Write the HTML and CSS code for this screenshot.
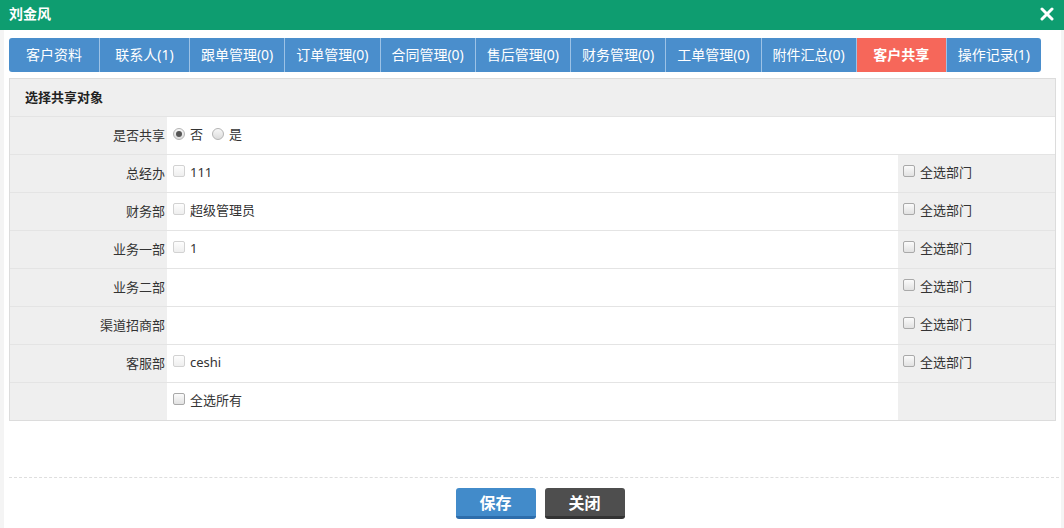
FILE: index.html
```html
<!DOCTYPE html>
<html lang="zh-CN">
<head>
<meta charset="utf-8">
<title>刘金风</title>
<link rel="stylesheet" href="styles.css">
</head>
<body>
<div class="dialog">
  <div class="titlebar">
    <span class="title">刘金风</span>
    <svg class="close" width="14" height="14" viewBox="0 0 14 14"><path d="M2 2 L12 12 M12 2 L2 12" stroke="#fff" stroke-width="3" stroke-linecap="round"/></svg>
  </div>
  <div class="content">
    <div class="tabs">
      <div class="tab first">客户资料</div>
      <div class="tab">联系人(1)</div>
      <div class="tab">跟单管理(0)</div>
      <div class="tab">订单管理(0)</div>
      <div class="tab">合同管理(0)</div>
      <div class="tab">售后管理(0)</div>
      <div class="tab">财务管理(0)</div>
      <div class="tab">工单管理(0)</div>
      <div class="tab">附件汇总(0)</div>
      <div class="tab active">客户共享</div>
      <div class="tab last">操作记录(1)</div>
    </div>

    <div class="panel">
      <div class="row head"><span class="head-text">选择共享对象</span></div>
      <div class="row">
        <div class="label">是否共享</div>
        <div class="value wide">
          <span class="radio checked"></span><span class="opt">否</span>
          <span class="radio"></span><span class="opt">是</span>
        </div>
      </div>
      <div class="row">
        <div class="label">总经办</div>
        <div class="value"><span class="cb dis"></span><span class="opt">111</span></div>
        <div class="side"><span class="cb"></span><span class="opt">全选部门</span></div>
      </div>
      <div class="row">
        <div class="label">财务部</div>
        <div class="value"><span class="cb dis"></span><span class="opt">超级管理员</span></div>
        <div class="side"><span class="cb"></span><span class="opt">全选部门</span></div>
      </div>
      <div class="row">
        <div class="label">业务一部</div>
        <div class="value"><span class="cb dis"></span><span class="opt">1</span></div>
        <div class="side"><span class="cb"></span><span class="opt">全选部门</span></div>
      </div>
      <div class="row">
        <div class="label">业务二部</div>
        <div class="value"></div>
        <div class="side"><span class="cb"></span><span class="opt">全选部门</span></div>
      </div>
      <div class="row">
        <div class="label">渠道招商部</div>
        <div class="value"></div>
        <div class="side"><span class="cb"></span><span class="opt">全选部门</span></div>
      </div>
      <div class="row">
        <div class="label">客服部</div>
        <div class="value"><span class="cb dis"></span><span class="opt">ceshi</span></div>
        <div class="side"><span class="cb"></span><span class="opt">全选部门</span></div>
      </div>
      <div class="row last-row">
        <div class="label"></div>
        <div class="value"><span class="cb"></span><span class="opt">全选所有</span></div>
        <div class="side"></div>
      </div>
    </div>

    <div class="footer">
      <button class="btn save">保存</button>
      <button class="btn closebtn">关闭</button>
    </div>
  </div>
</div>
</body>
</html>
```

FILE: styles.css
```css
* { box-sizing: border-box; }
html, body { margin: 0; padding: 0; }
body {
  width: 1064px;
  height: 528px;
  background: #f4f4f4;
  font-family: "Noto Sans", "Noto Sans CJK SC", sans-serif;
  color: #333;
  overflow: hidden;
}
.dialog { height: 528px; display: flex; flex-direction: column; }
.titlebar {
  height: 30px;
  background: #0e9d70;
  display: flex;
  align-items: center;
  justify-content: space-between;
  padding: 0 10px 2px 9px;
}
.title {
  color: #fff;
  font-weight: bold;
  font-size: 14px;
  line-height: 16px;
}
.close { display: block; }
.content {
  flex: 1;
  background: #fff;
  margin: 0 3px 0 4px;
  padding: 8px 5px 0 5px;
}
.tabs {
  display: flex;
  height: 34px;
  width: 1032px;
  border-radius: 3px;
  overflow: hidden;
}
.tab {
  background: #4a8ecc;
  color: #fff;
  font-size: 14px;
  line-height: 33px;
  padding: 0 10px;
  min-width: 90px;
  text-align: center;
  border-right: 1px solid #9cc2e6;
  white-space: nowrap;
  flex: 1 1 auto;
}
.tab.first { min-width: 91px; }
.tab.last { border-right: none; }
.tab.active { background: #f6675a; font-weight: bold; }

.panel {
  margin-top: 6px;
  width: 1047px;
  border: 1px solid #dcdcdc;
  background: #efefef;
}
.row {
  display: flex;
  height: 38px;
  border-bottom: 1px solid #e4e4e4;
  font-size: 13px;
}
.row.last-row { border-bottom: none; height: 37px; }
.row.head { align-items: center; padding-left: 15px; padding-bottom: 2px; }
.head-text { font-weight: bold; font-size: 13px; color: #222; }
.label {
  width: 157px;
  flex: none;
  text-align: right;
  padding-right: 2px;
  padding-bottom: 3px;
  display: flex;
  align-items: center;
  justify-content: flex-end;
  color: #333;
}
.value {
  width: 731px;
  flex: none;
  background: #fff;
  display: flex;
  align-items: center;
  padding-left: 6px;
  padding-bottom: 3px;
}
.value.wide { width: auto; flex: 1; }
.side {
  flex: 1;
  display: flex;
  align-items: center;
  padding-left: 5px;
  padding-bottom: 3px;
}
.opt { margin-left: 5px; margin-right: 9px; line-height: 16px; }
.cb {
  width: 12px;
  height: 12px;
  border: 1px solid #a9a9a9;
  border-radius: 2px;
  background: linear-gradient(#fbfbfb, #e2e2e2);
  flex: none;
  margin-top: -3px;
}
.cb.dis {
  border-color: #d2d2d2;
  background: linear-gradient(#fdfdfd, #eeeeee);
}
.radio {
  width: 12px;
  height: 12px;
  border: 1px solid #b4b4b4;
  border-radius: 50%;
  background: linear-gradient(#f7f7f7, #dcdcdc);
  flex: none;
  position: relative;
  margin-top: 0;
}
.radio.checked::after {
  content: "";
  position: absolute;
  left: 2px;
  top: 2px;
  width: 6px;
  height: 6px;
  border-radius: 50%;
  background: #555;
}
.footer {
  margin-top: 56px;
  border-top: 1px dashed #dedede;
  width: 1050px;
  display: flex;
  justify-content: center;
  gap: 9px;
  padding: 10px 0 0 12px;
}
.btn {
  width: 80px;
  height: 31px;
  border: none;
  border-radius: 3px;
  color: #fff;
  font-family: "Noto Sans CJK SC", sans-serif;
  font-weight: bold;
  font-size: 16px;
  line-height: 27px;
  padding: 0;
}
.btn.save { background: #428bca; border-bottom: 3px solid #2d6dab; }
.btn.closebtn { background: #4e4e4e; border-bottom: 3px solid #333; }
```
